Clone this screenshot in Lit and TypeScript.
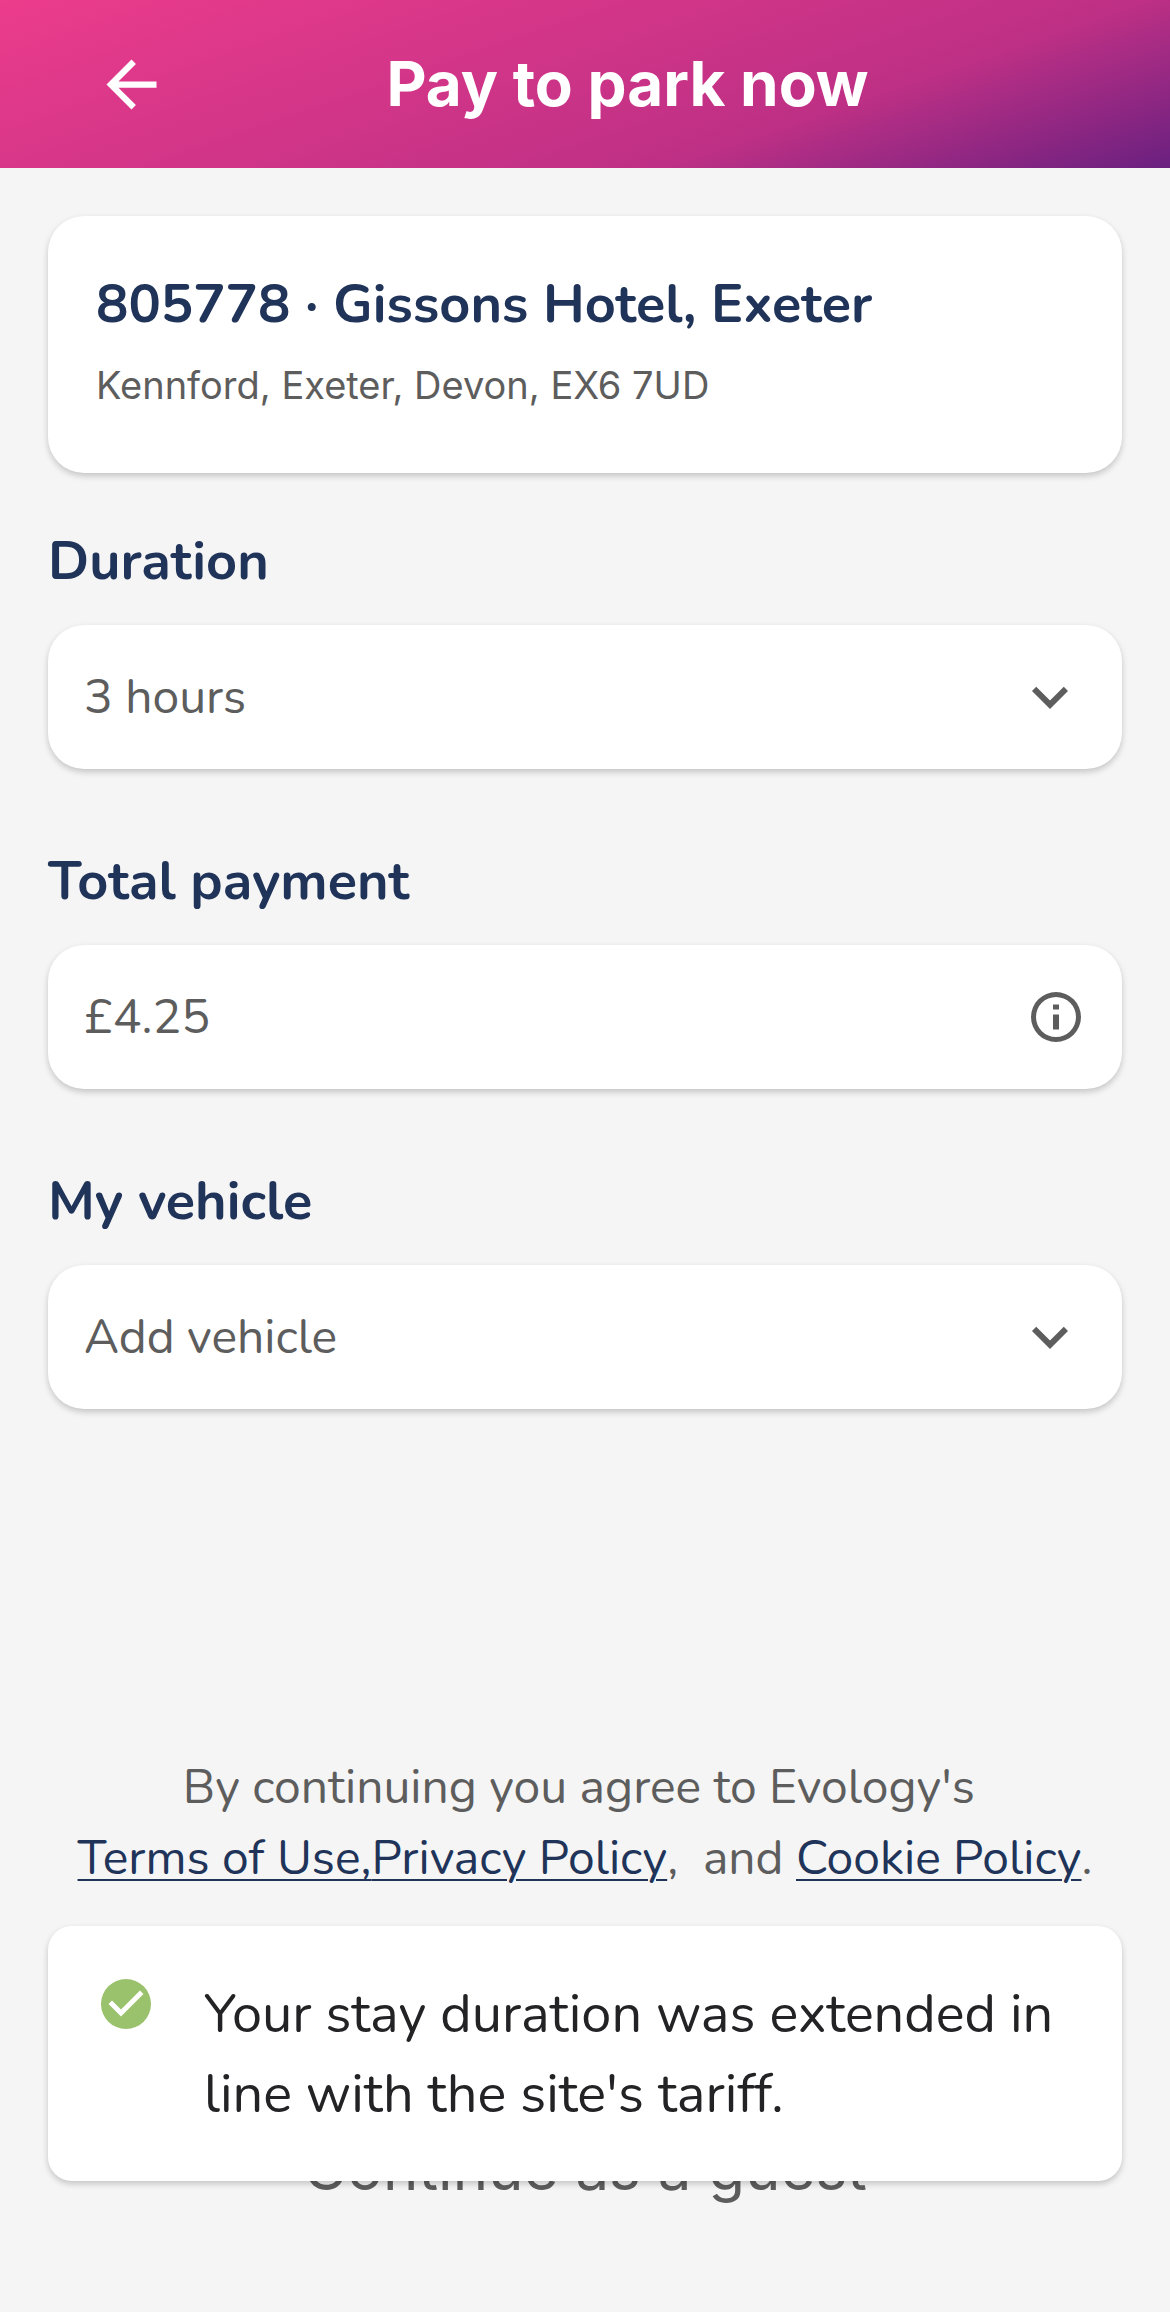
import { LitElement, html, css, svg } from "lit";
import { customElement, state } from "lit/decorators.js";

const arrowBack = svg`<path d="M20 11H7.83l5.59-5.59L12 4l-8 8 8 8 1.41-1.41L7.83 13H20z" />`;
const expandMore = svg`<path d="M7.41 8.59 12 13.17l4.59-4.58L18 10l-6 6-6-6z" />`;
const infoOutline = svg`<path d="M10.8 7h2.4v2h-2.4zM10.8 11h2.4v6h-2.4zM12 2a10 10 0 1 0 0 20 10 10 0 0 0 0-20zm0 18a8 8 0 1 1 0-16 8 8 0 0 1 0 16z" />`;
const checkCircle = svg`<path d="M12 2a10 10 0 1 0 0 20 10 10 0 0 0 0-20zM10 17l-5-5 1.41-1.41L10 14.17l7.59-7.59L19 8z" />`;

@customElement("app-root")
export class AppRoot extends LitElement {
  static styles = css`
    :host {
      display: block;
      --navy: #203359;
      --grey: #5d5d5d;
      --ui: Inter, Roboto, "Liberation Sans", sans-serif;
      --shadow: 0 3px 6px rgba(0, 0, 0, 0.2);
      font-family: Nunito, "Open Sans", sans-serif;
      color: var(--grey);
    }
    * {
      box-sizing: border-box;
    }
    .page {
      display: flex;
      flex-direction: column;
      min-height: 100vh;
      background: #f5f5f5;
    }
    button,
    select,
    input {
      font: inherit;
      color: inherit;
      border: 0;
      margin: 0;
      padding: 0;
      background: none;
    }
    svg {
      display: block;
      fill: currentColor;
    }
    .bar {
      display: flex;
      align-items: center;
      height: 168px;
      padding: 0 84px 0 94px;
      color: #fff;
      background: linear-gradient(161deg, #ec3c8c 0%, #be3085 69%, #6a2080 100%);
    }
    .back svg {
      width: 75px;
      height: 75px;
    }
    .title {
      flex: 1;
      margin: 0;
      text-align: center;
      font: 700 62px/80px var(--ui);
    }
    .content {
      display: flex;
      flex-direction: column;
      gap: 48px;
      padding: 48px;
    }
    .site {
      display: flex;
      flex-direction: column;
      gap: 12px;
      padding: 48px 48px 58px;
      border-radius: 36px;
      background: #fff;
      box-shadow: var(--shadow);
    }
    .site-name,
    .label {
      margin: 0;
      font-size: 54px;
      line-height: 80px;
      font-weight: 700;
      color: var(--navy);
    }
    .address {
      margin: 0;
      font: 400 38px/59px var(--ui);
    }
    .fields {
      display: flex;
      flex-direction: column;
      gap: 72px;
    }
    .field {
      display: flex;
      flex-direction: column;
      gap: 24px;
    }
    .box {
      display: grid;
      align-items: center;
      height: 144px;
      border-radius: 36px;
      background: #fff;
      box-shadow: var(--shadow);
    }
    .control {
      grid-area: 1 / 1;
      width: 100%;
      height: 100%;
      padding: 0 120px 0 36px;
      border-radius: 36px;
      appearance: none;
      font-size: 48px;
    }
    .chevron,
    .info {
      grid-area: 1 / 1;
      justify-self: end;
      margin-right: 36px;
    }
    .chevron {
      width: 72px;
      height: 72px;
      pointer-events: none;
    }
    .info svg,
    .toast-icon {
      width: 60px;
      height: 60px;
    }
    .footer {
      display: flex;
      flex-direction: column;
      gap: 32px;
      margin-top: auto;
      padding: 0 48px 72px;
    }
    .legal {
      margin: 0;
      text-align: center;
      font-size: 48px;
      line-height: 71px;
    }
    .legal a {
      display: inline-block;
      color: var(--navy);
      text-decoration-thickness: 2px;
      text-underline-offset: 5px;
    }
    .actions {
      position: relative;
      display: flex;
      flex-direction: column;
      padding-top: 170px;
    }
    .guest {
      height: 144px;
      font: 400 60px/72px var(--ui);
    }
    .toast {
      position: absolute;
      top: 0;
      left: 0;
      right: 0;
      display: flex;
      gap: 48px;
      padding: 48px 48px 47px;
      border-radius: 24px;
      background: #fff;
      box-shadow: var(--shadow);
    }
    .toast-icon {
      flex: none;
      color: #9ac16b;
    }
    .toast-text {
      margin: 0;
      font-size: 54px;
      line-height: 80px;
      color: #232325;
    }
  `;

  @state() private fee = "£4.25";

  render() {
    return html`
      <div class="page">
        <header class="bar">
          <button class="back" aria-label="Back"><svg viewBox="0 0 24 24">${arrowBack}</svg></button>
          <h1 class="title">Pay to park now</h1>
        </header>
        <main class="content">
          <section class="site">
            <h2 class="site-name">805778 · Gissons Hotel, Exeter</h2>
            <p class="address">Kennford, Exeter, Devon, EX6 7UD</p>
          </section>
          <form class="fields">
            <div class="field">
              <label class="label" for="duration">Duration</label>
              <div class="box">
                <select class="control" id="duration">
                  <option>3 hours</option>
                </select>
                <svg class="chevron" viewBox="0 0 24 24">${expandMore}</svg>
              </div>
            </div>
            <div class="field">
              <label class="label" for="total">Total payment</label>
              <div class="box">
                <input class="control" id="total" type="text" readonly .value=${this.fee} />
                <button class="info" type="button" aria-label="Payment details">
                  <svg viewBox="0 0 24 24">${infoOutline}</svg>
                </button>
              </div>
            </div>
            <div class="field">
              <label class="label" for="vehicle">My vehicle</label>
              <div class="box">
                <select class="control" id="vehicle">
                  <option>Add vehicle</option>
                </select>
                <svg class="chevron" viewBox="0 0 24 24">${expandMore}</svg>
              </div>
            </div>
          </form>
        </main>
        <footer class="footer">
          <p class="legal">
            By continuing you agree to Evology's&nbsp;<br />
            <a href="#terms">Terms of Use,</a><a href="#privacy">Privacy Policy</a>,&nbsp; and
            <a href="#cookies">Cookie Policy</a>.
          </p>
          <div class="actions">
            <button class="guest">Continue as a guest</button>
            <div class="toast" role="status">
              <svg class="toast-icon" viewBox="0 0 24 24">${checkCircle}</svg>
              <p class="toast-text">Your stay duration was extended in line with the site's tariff.</p>
            </div>
          </div>
        </footer>
      </div>
    `;
  }
}
